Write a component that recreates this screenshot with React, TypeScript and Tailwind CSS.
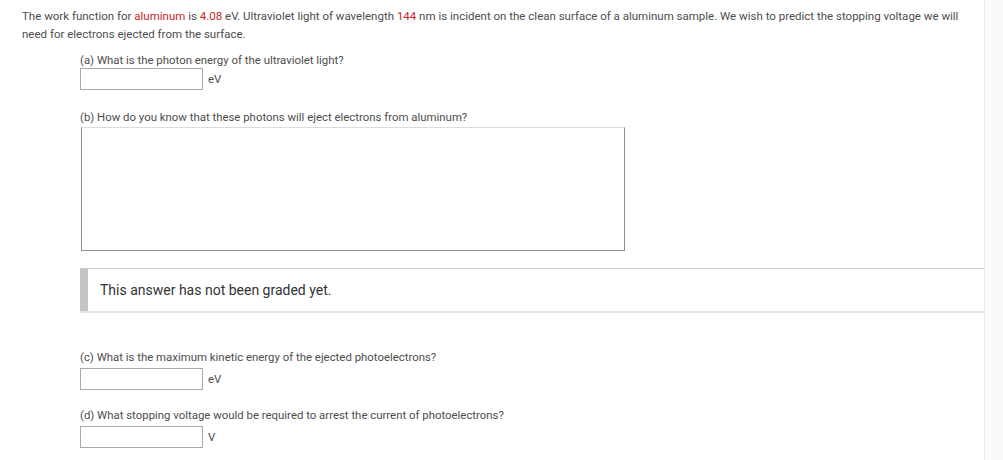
import React from "react";

const font = { fontFamily: "Roboto, 'Liberation Sans', sans-serif" };

function UnitInput({ unit }: { unit: string }) {
  return (
    <div className="flex items-center">
      <div className="h-[22px] w-[123px] border border-[#a9a9a9] bg-white" />
      <span className="ml-[5px] text-[11.4px] leading-[18px] text-[#4d4d4d]">{unit}</span>
    </div>
  );
}

export default function App() {
  return (
    <div className="flex min-h-[460px] bg-[#fafafa]" style={font}>
      <div className="w-[985px] shrink-0 border-r border-[#ececec] bg-white pt-[8px] pl-[22px] text-[#4d4d4d]">
        <p className="pr-[16px] text-[11.5px] leading-[17.5px]">
          The work function for <span className="text-[#c62828]">aluminum</span> is{" "}
          <span className="text-[#c62828]">4.08</span> eV. Ultraviolet light of wavelength{" "}
          <span className="text-[#c62828]">144</span> nm is incident on the clean surface of a aluminum sample. We wish to predict the stopping voltage we will need for electrons ejected from the surface.
        </p>
        <div className="ml-[58px]">
          <div className="mt-[9px] text-[11.4px] leading-[16px]">(a) What is the photon energy of the ultraviolet light?</div>
          <UnitInput unit="eV" />
          <div className="mt-[19px] text-[11.4px] leading-[16px]">(b) How do you know that these photons will eject electrons from aluminum?</div>
          <div className="mt-[2px] ml-[1px] h-[124px] w-[544px] border border-t-[#dcdcdc] border-r-[#8f8f8f] border-b-[#8f8f8f] border-l-[#8f8f8f] bg-white" />
          <div className="mt-[17px] flex h-[45px] items-center border-t border-b-2 border-t-[#cccccc] border-b-[#e3e3e3] bg-white">
            <div className="h-full w-[8px] bg-[#c4c4c4]" />
            <span className="ml-[12px] text-[14px] text-[#333]">This answer has not been graded yet.</span>
          </div>
          <div className="mt-[36px] text-[11.4px] leading-[16px]">(c) What is the maximum kinetic energy of the ejected photoelectrons?</div>
          <div className="mt-[3px]">
            <UnitInput unit="eV" />
          </div>
          <div className="mt-[17px] text-[11.4px] leading-[16px]">(d) What stopping voltage would be required to arrest the current of photoelectrons?</div>
          <div className="mt-[3px]">
            <UnitInput unit="V" />
          </div>
        </div>
      </div>
      <div className="flex-1" />
    </div>
  );
}
